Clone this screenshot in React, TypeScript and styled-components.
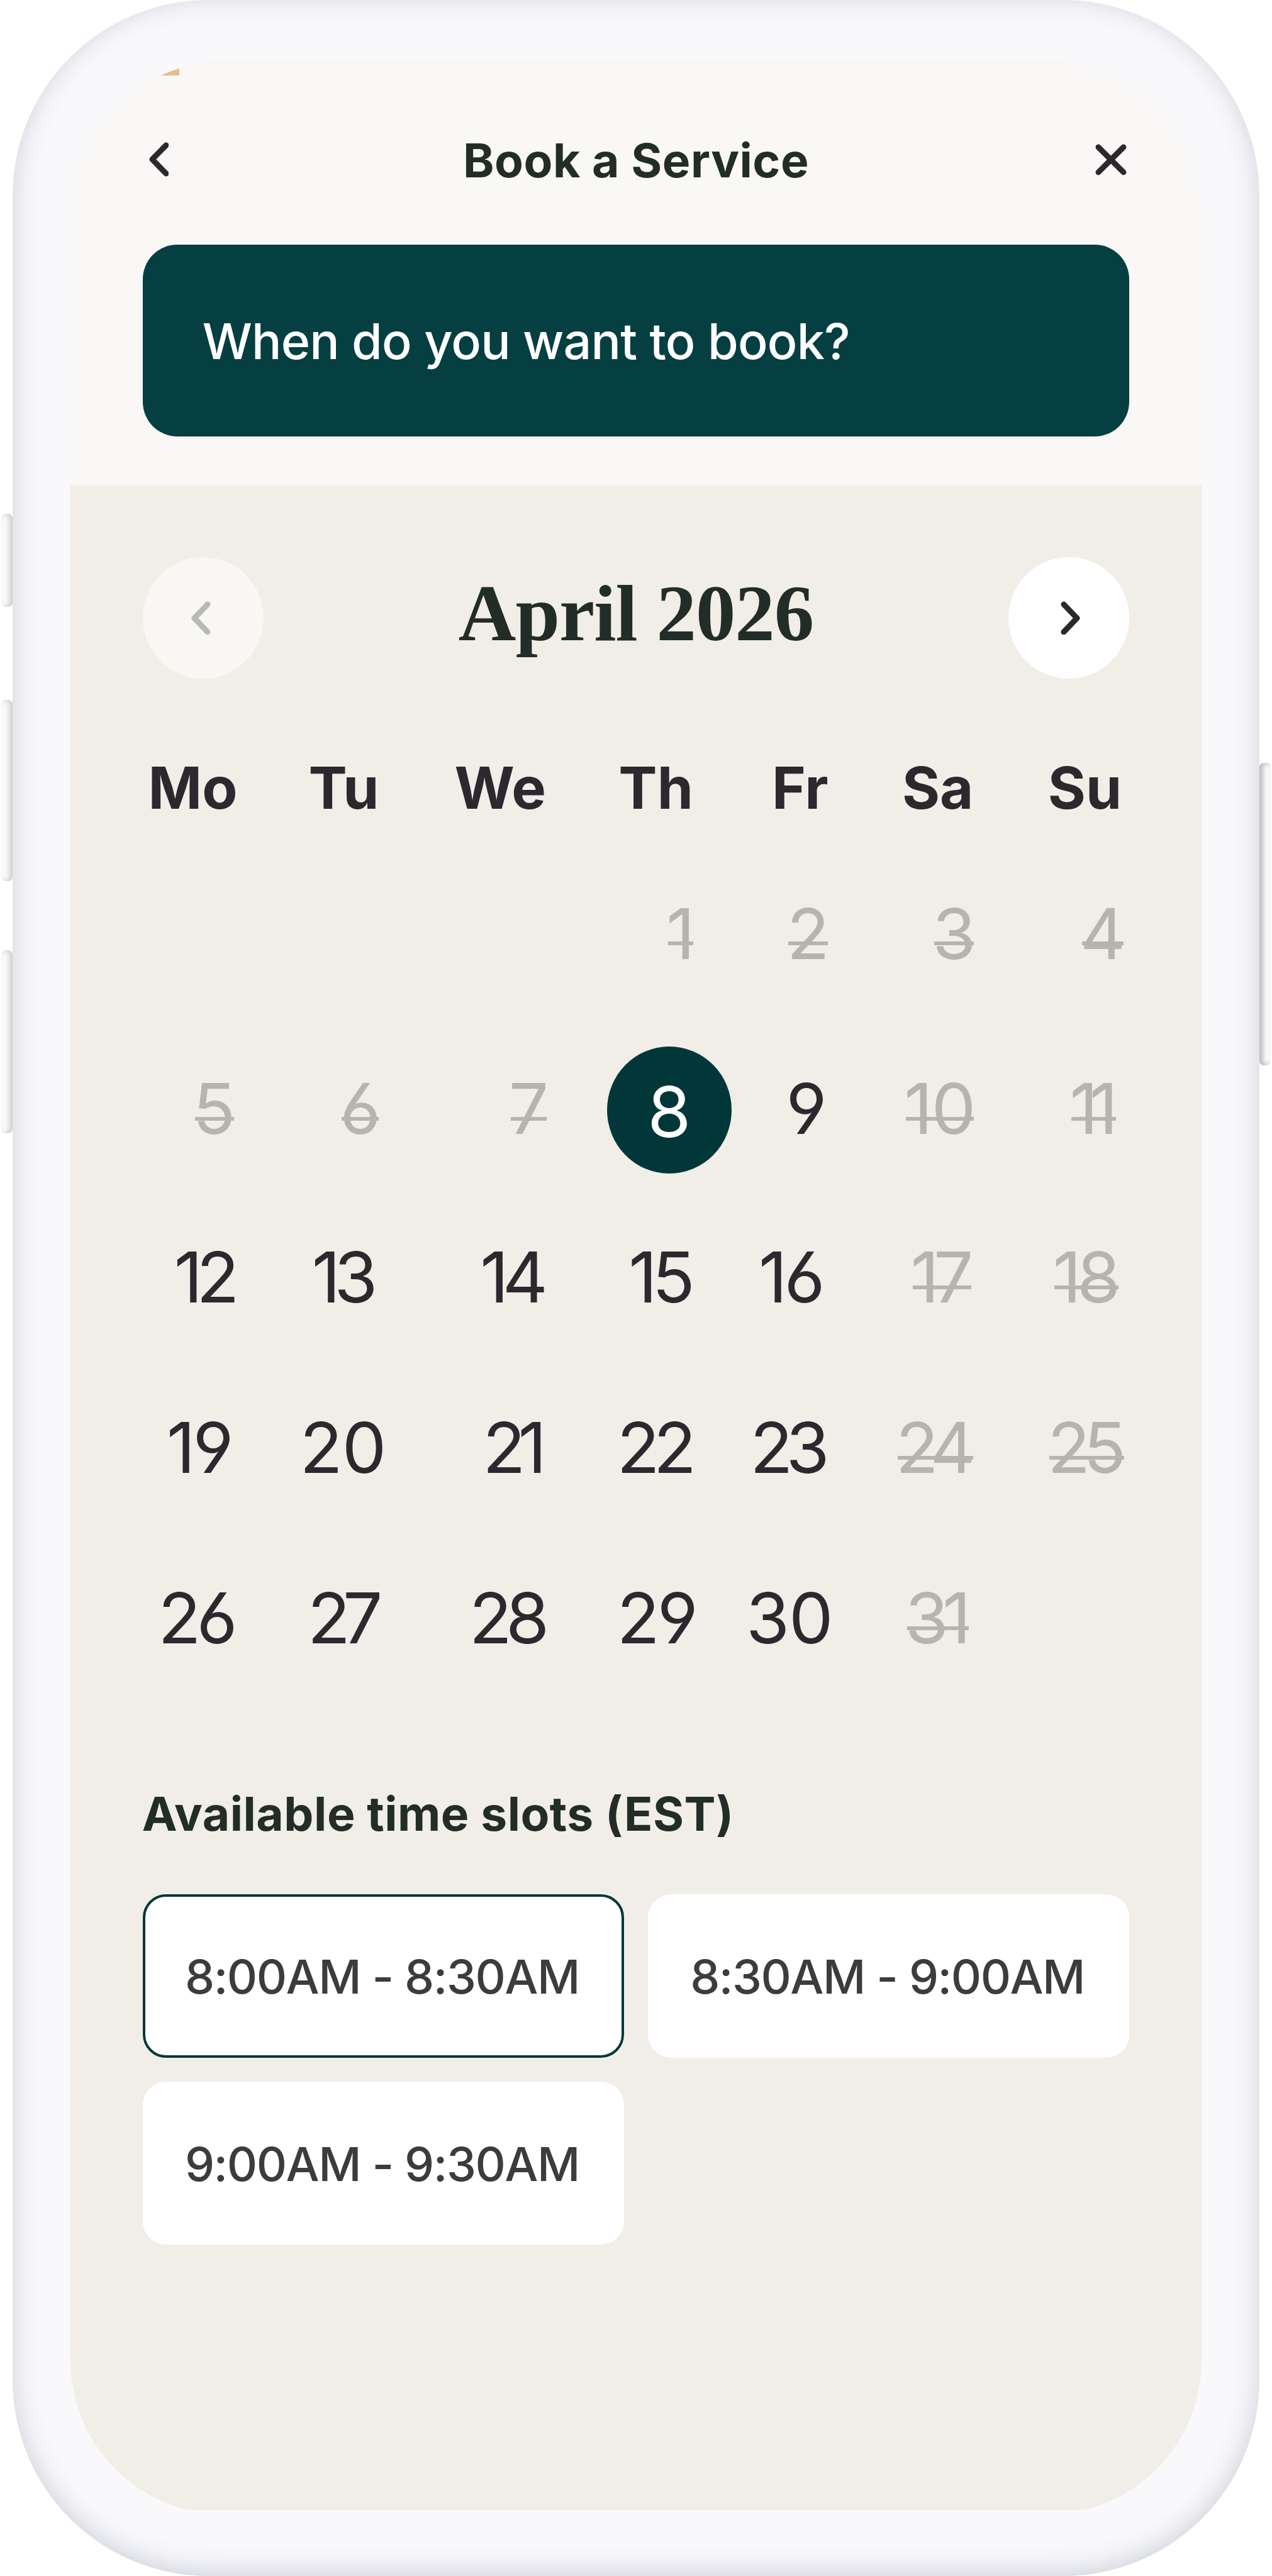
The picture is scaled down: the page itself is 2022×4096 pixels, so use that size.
import React from 'react';
import styled, { createGlobalStyle, css } from 'styled-components';

const colors = {
  ink: '#222d27',
  text: '#2c282e',
  muted: '#b7b3ad',
  slot: '#3c3c3c',
  teal: '#053f42',
  tealDark: '#02373a',
  sand: '#f1eee7',
  paper: '#f9f8f6',
  shell: '#f9f9fc',
};

const GlobalStyle = createGlobalStyle`
  body {
    margin: 0;
    background: #fff;
    overflow: hidden;
  }

  button {
    font: inherit;
    color: inherit;
    border: 0;
    padding: 0;
    margin: 0;
    background: none;
  }

  h1, h2, h3, p {
    margin: 0;
    font-weight: inherit;
  }
`;

const Stage = styled.div`
  position: relative;
  box-sizing: border-box;
  width: 2024px;
  height: 4100px;
  padding: 0 20px;
  zoom: 0.99902;
  font-family: Inter, 'Liberation Sans', sans-serif;
  color: ${colors.text};
`;

const SideKey = styled.div<{ $side: 'left' | 'right'; $top: number; $height: number }>`
  position: absolute;
  ${({ $side }) => $side}: 2px;
  top: ${({ $top }) => $top}px;
  width: 18px;
  height: ${({ $height }) => $height}px;
  box-sizing: border-box;
  border-radius: 7px;
  background: #fafafb;
  box-shadow: ${({ $side }) =>
    $side === 'left'
      ? 'inset -5px 0 8px rgba(0, 0, 0, 0.18)'
      : 'inset 5px 0 8px rgba(0, 0, 0, 0.28)'};
`;

const Phone = styled.div`
  box-sizing: border-box;
  height: 100%;
  padding: 98px 92px;
  border-radius: 312px;
  background: ${colors.shell};
  box-shadow: inset 0 -6px 44px rgba(50, 66, 90, 0.22);
`;

const Screen = styled.div`
  position: relative;
  display: flex;
  flex-direction: column;
  box-sizing: border-box;
  height: 3904px;
  padding: 2px 0 7px;
  overflow: hidden;
  border-radius: 245px;
  background: ${colors.shell};
`;

const Accent = styled.div`
  position: absolute;
  left: 140px;
  top: 0;
  width: 33px;
  height: 22px;
  background: #e5be88;
`;

const Header = styled.header`
  box-sizing: border-box;
  height: 673px;
  padding: 108px 115px 0;
  border-top: 2px solid #f3f2ee;
  background: ${colors.paper};
`;

const TitleBar = styled.div`
  display: flex;
  align-items: center;
  justify-content: space-between;
  height: 90px;
  padding: 0 4px 0 9px;
`;

const Title = styled.h1`
  padding: 2px 0 0 13px;
  font-size: 75px;
  line-height: 90px;
  font-weight: 700;
  letter-spacing: 0.5px;
  color: ${colors.ink};
`;

const Icon = styled.svg`
  display: block;
  fill: none;
  stroke: currentColor;
  stroke-width: 9;
  stroke-linecap: round;
  stroke-linejoin: round;
`;

const Banner = styled.p`
  display: flex;
  align-items: center;
  box-sizing: border-box;
  height: 306px;
  margin-top: 90px;
  padding: 3px 0 0 95px;
  border-radius: 55px;
  background: ${colors.teal};
  color: #fff;
  font-size: 79px;
  font-weight: 500;
  letter-spacing: -0.8px;
`;

const Body = styled.main`
  flex: 1;
  padding: 114px 115px 0;
  background: ${colors.sand};
`;

const MonthBar = styled.div`
  display: flex;
  align-items: center;
  justify-content: space-between;
  height: 193px;
`;

const MonthButton = styled.button`
  display: flex;
  align-items: center;
  justify-content: center;
  box-sizing: border-box;
  width: 192px;
  height: 193px;
  padding-left: 6px;
  border-radius: 50%;
  background: #fff;

  &:disabled {
    padding: 0 7px 0 0;
    background: #f8f7f3;
    color: #b8b8b6;
  }
`;

const Month = styled.h2`
  padding-bottom: 14px;
  font-family: 'Liberation Serif', serif;
  font-size: 127px;
  line-height: 140px;
  font-weight: 700;
  letter-spacing: -1px;
  color: ${colors.ink};
`;

const columns = css`
  display: grid;
  grid-template-columns: 149px 234px 261px 236px 213px 230px 237px;
  width: 1560px;
`;

const Weekdays = styled.div`
  ${columns}
  margin-top: 118px;
  font-size: 92px;
  line-height: 112px;
  font-weight: 700;
`;

const Weekday = styled.span<{ $inset: number }>`
  justify-self: end;
  margin-right: ${({ $inset }) => $inset}px;
  white-space: nowrap;
`;

const Week = styled.div<{ $gap: number }>`
  ${columns}
  margin-top: ${({ $gap }) => $gap}px;
  height: 140px;
  font-size: 112px;
  line-height: 140px;
  font-feature-settings: 'cv03', 'cv04';
`;

type DayState = 'open' | 'off' | 'selected' | 'none';

const Day = styled.span<{ $state: DayState; $inset: number; $tracking: number }>`
  position: relative;
  justify-self: end;
  margin-right: ${({ $inset, $tracking }) => $inset - $tracking}px;
  letter-spacing: ${({ $tracking }) => $tracking}px;

  ${({ $state, $tracking }) =>
    $state === 'off' &&
    css`
      color: ${colors.muted};

      &::after {
        content: '';
        position: absolute;
        left: 3px;
        right: ${$tracking + 3}px;
        top: 83px;
        height: 6px;
        background: ${colors.muted};
      }
    `}

  ${({ $state }) =>
    $state === 'selected' &&
    css`
      display: flex;
      align-items: center;
      justify-content: center;
      box-sizing: border-box;
      width: 198px;
      height: 202px;
      margin-top: -29px;
      margin-right: -57px;
      padding-top: 6px;
      border-radius: 50%;
      background: ${colors.tealDark};
      color: #fff;
    `}
`;

const SlotsTitle = styled.h3`
  margin: 196px 0 0 -1px;
  font-size: 75px;
  line-height: 90px;
  font-weight: 700;
  letter-spacing: 0.5px;
  color: ${colors.ink};
`;

const Slots = styled.div`
  display: grid;
  grid-template-columns: 766px 766px;
  gap: 38px;
  margin-top: 83px;
`;

const Slot = styled.button<{ $selected?: boolean }>`
  box-sizing: border-box;
  height: 260px;
  padding: 2px 4px 0 0;
  border-radius: 37px;
  background: #fff;
  color: ${colors.slot};
  font-size: 75px;
  font-weight: 500;
  letter-spacing: -1.5px;
  white-space: nowrap;
  ${({ $selected }) => $selected && `border: 5px solid ${colors.tealDark};`}
`;

const weekdays: [string, number][] = [
  ['Mo', -2],
  ['Tu', 7],
  ['We', 2],
  ['Th', 4],
  ['Fr', 2],
  ['Sa', 1],
  ['Su', 2],
];

type DayData = [label: string, state: DayState, inset: number, tracking: number];

const blank: DayData = ['', 'none', 0, 0];

const weeks: { gap: number; days: DayData[] }[] = [
  {
    gap: 106,
    days: [blank, blank, blank, ['1', 'off', 1, 0], ['2', 'off', 0, 0], ['3', 'off', -3, 0], ['4', 'off', -4, 0]],
  },
  {
    gap: 139,
    days: [
      ['5', 'off', 1, 0],
      ['6', 'off', 4, 0],
      ['7', 'off', -2, 0],
      ['8', 'selected', 0, 0],
      ['9', 'open', 4, 0],
      ['10', 'off', -3, -2],
      ['11', 'off', 8, -14],
    ],
  },
  {
    gap: 128,
    days: [
      ['12', 'open', -5, -10],
      ['13', 'open', 9, -10],
      ['14', 'open', -1, -10],
      ['15', 'open', 1, -8],
      ['16', 'open', 7, -5],
      ['17', 'off', 1, -9],
      ['18', 'off', 4, -7],
    ],
  },
  {
    gap: 131,
    days: [
      ['19', 'open', 4, -4],
      ['20', 'open', -5, -1],
      ['21', 'open', 1, -12],
      ['22', 'open', -1, -10],
      ['23', 'open', 0, -11],
      ['24', 'off', -2, -12],
      ['25', 'off', -5, -11],
    ],
  },
  {
    gap: 132,
    days: [
      ['26', 'open', -2, -7],
      ['27', 'open', 1, -12],
      ['28', 'open', -3, -10],
      ['29', 'open', -4, -4],
      ['30', 'open', -6, -1],
      ['31', 'off', 5, -10],
      blank,
    ],
  },
];

const App: React.FC = () => (
  <>
    <GlobalStyle />
    <Stage>
      <SideKey $side="left" $top={818} $height={148} />
      <SideKey $side="left" $top={1114} $height={288} />
      <SideKey $side="left" $top={1512} $height={292} />
      <SideKey $side="right" $top={1214} $height={482} />
      <Phone>
        <Screen>
          <Header>
            <TitleBar>
              <button aria-label="Back">
                <Icon width="32" height="55" viewBox="0 0 32 55">
                  <path d="M28 5L6 27.5L28 50" />
                </Icon>
              </button>
              <Title>Book a Service</Title>
              <button aria-label="Close">
                <Icon width="50" height="50" viewBox="0 0 50 50">
                  <path d="M5 5L45 45M45 5L5 45" />
                </Icon>
              </button>
            </TitleBar>
            <Banner>When do you want to book?</Banner>
          </Header>
          <Accent />
          <Body>
            <MonthBar>
              <MonthButton disabled aria-label="Previous month">
                <Icon width="32" height="54" viewBox="0 0 32 54">
                  <path d="M27 5L6 27L27 49" />
                </Icon>
              </MonthButton>
              <Month>April 2026</Month>
              <MonthButton aria-label="Next month">
                <Icon width="32" height="54" viewBox="0 0 32 54">
                  <path d="M5 5L26 27L5 49" />
                </Icon>
              </MonthButton>
            </MonthBar>
            <Weekdays>
              {weekdays.map(([label, inset]) => (
                <Weekday key={label} $inset={inset}>
                  {label}
                </Weekday>
              ))}
            </Weekdays>
            {weeks.map(({ gap, days }, row) => (
              <Week key={row} $gap={gap}>
                {days.map(([label, state, inset, tracking], col) => (
                  <Day key={col} $state={state} $inset={inset} $tracking={tracking}>
                    {label}
                  </Day>
                ))}
              </Week>
            ))}
            <SlotsTitle>Available time slots (EST)</SlotsTitle>
            <Slots>
              <Slot $selected>8:00AM - 8:30AM</Slot>
              <Slot>8:30AM - 9:00AM</Slot>
              <Slot>9:00AM - 9:30AM</Slot>
            </Slots>
          </Body>
        </Screen>
      </Phone>
    </Stage>
  </>
);

export default App;
